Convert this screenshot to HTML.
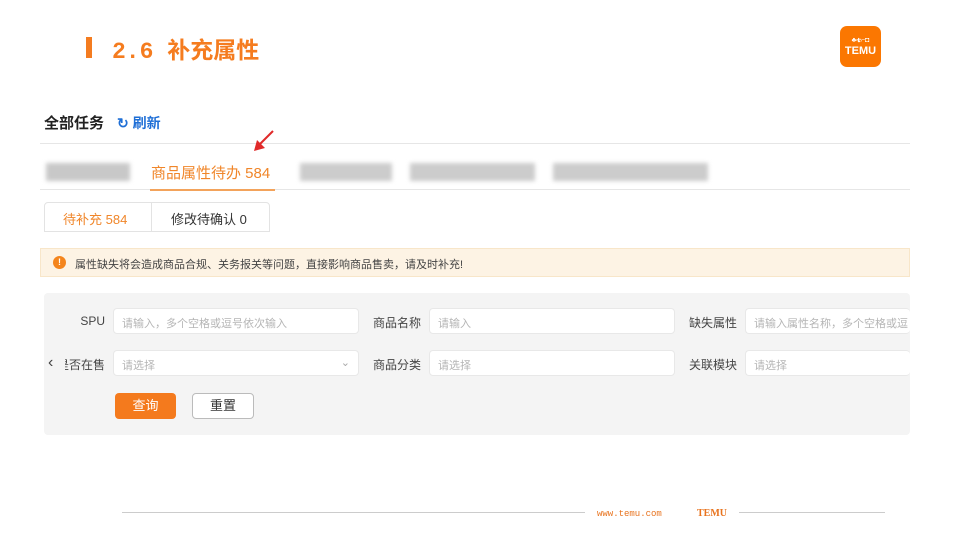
<!DOCTYPE html>
<html><head><meta charset="utf-8"><style>
*{margin:0;padding:0;box-sizing:border-box}
body{width:960px;height:540px;background:#fff;position:relative;overflow:hidden;font-family:"Liberation Sans","Noto Sans CJK SC",sans-serif}
.a{position:absolute}
.title{left:112px;top:31px;font-family:"Liberation Mono","Noto Sans CJK SC",monospace;font-size:23px;color:#f57c1f;font-weight:bold}
.bar{left:86px;top:37px;width:6px;height:21px;background:#f47c20}
.logo{left:840px;top:26px;width:41px;height:41px;border-radius:7px;background:#fb7701;color:#fff;font-size:10px;font-weight:bold;text-align:center;line-height:1}
.blur{background:#ccc;filter:blur(2px)}
.inp{background:#fff;border:1px solid #e8e8e8;border-radius:4px;height:26px;font-size:11px;color:#b5b5b5;padding:6px 8px;white-space:nowrap;overflow:hidden}
.lbl{font-size:12px;color:#444;text-align:right;white-space:nowrap;overflow:hidden;direction:rtl}
</style></head><body>
<div class="a bar"></div>
<div class="a title">2.6 补充属性</div>
<div class="a logo"><div style="margin-top:11px;font-size:7px">♣ቴ⌐◘</div><div style="margin-top:2px;font-size:11px">TEMU</div></div>

<div class="a" style="left:44px;top:112px;font-size:15px;font-weight:bold;color:#222">全部任务</div>
<div class="a" style="left:117px;top:113px;font-size:14px;font-weight:bold;color:#1f6fd6">↻ 刷新</div>
<div class="a" style="left:40px;top:143px;width:870px;height:1px;background:#e6e6e6"></div>
<div class="a" style="left:40px;top:189px;width:870px;height:1px;background:#e6e6e6"></div>

<div class="a blur" style="left:46px;top:163px;width:84px;height:18px;background:#c8c8c8"></div>
<div class="a" style="left:151px;top:162px;font-size:15px;color:#f0862a">商品属性待办 584</div>
<div class="a" style="left:150px;top:189px;width:125px;height:2px;background:#f3a35b"></div>
<div class="a blur" style="left:300px;top:163px;width:92px;height:18px"></div>
<div class="a blur" style="left:410px;top:163px;width:125px;height:18px"></div>
<div class="a blur" style="left:553px;top:163px;width:155px;height:18px"></div>
<svg class="a" style="left:250px;top:128px" width="26" height="26" viewBox="0 0 26 26"><path d="M23 3 L8 18" stroke="#e02a2a" stroke-width="2"/><path d="M4 23 L7 12 L15 20 Z" fill="#e02a2a"/></svg>

<div class="a" style="left:44px;top:202px;width:226px;height:30px;border:1px solid #e3e3e3;border-radius:4px 4px 0 0"></div>
<div class="a" style="left:151px;top:202px;width:1px;height:30px;background:#e3e3e3"></div>
<div class="a" style="left:63px;top:209px;font-size:13px;color:#f0862a">待补充 584</div>
<div class="a" style="left:171px;top:209px;font-size:13px;color:#333">修改待确认 0</div>

<div class="a" style="left:40px;top:248px;width:870px;height:29px;background:#fdf3e4;border:1px solid #f8e6c9"></div>
<div class="a" style="left:53px;top:256px;width:13px;height:13px;border-radius:50%;background:#f4851d;color:#fff;font-size:9px;text-align:center;line-height:13px;font-weight:bold">!</div>
<div class="a" style="left:75px;top:256px;font-size:11px;color:#444">属性缺失将会造成商品合规、关务报关等问题，直接影响商品售卖，请及时补充!</div>

<div class="a" style="left:44px;top:293px;width:866px;height:142px;background:#f4f4f4;border-radius:4px"></div>
<div class="a lbl" style="left:60px;top:314px;width:45px">SPU</div>
<div class="a inp" style="left:113px;top:308px;width:246px">请输入，多个空格或逗号依次输入</div>
<div class="a lbl" style="left:365px;top:314px;width:56px">商品名称</div>
<div class="a inp" style="left:429px;top:308px;width:246px">请输入</div>
<div class="a lbl" style="left:681px;top:314px;width:56px">缺失属性</div>
<div class="a inp" style="left:745px;top:308px;width:165px;border-right:none">请输入属性名称，多个空格或逗</div>
<div class="a" style="left:48px;top:354px;font-size:16px;color:#444">‹</div>
<div class="a lbl" style="left:65px;top:356px;width:40px">是否在售</div>
<div class="a inp" style="left:113px;top:350px;width:246px">请选择<span style="position:absolute;right:8px;top:5px;color:#aaa">⌄</span></div>
<div class="a lbl" style="left:365px;top:356px;width:56px">商品分类</div>
<div class="a inp" style="left:429px;top:350px;width:246px">请选择</div>
<div class="a lbl" style="left:681px;top:356px;width:56px">关联模块</div>
<div class="a inp" style="left:745px;top:350px;width:165px;border-right:none">请选择</div>
<div class="a" style="left:115px;top:393px;width:61px;height:26px;background:#f47a1d;border-radius:4px;color:#fff;font-size:13px;text-align:center;line-height:26px">查询</div>
<div class="a" style="left:192px;top:393px;width:62px;height:26px;background:#fff;border:1px solid #bbb;border-radius:4px;color:#333;font-size:13px;text-align:center;line-height:24px">重置</div>

<div class="a" style="left:122px;top:512px;width:463px;height:1px;background:#ccc"></div>
<div class="a" style="left:597px;top:509px;font-family:'Liberation Mono',monospace;font-size:9px;color:#e8731e">www.temu.com</div>
<div class="a" style="left:697px;top:508px;font-family:'Liberation Serif',serif;font-size:10px;font-weight:bold;color:#e8731e">TEMU</div>
<div class="a" style="left:739px;top:512px;width:146px;height:1px;background:#ccc"></div>
</body></html>
